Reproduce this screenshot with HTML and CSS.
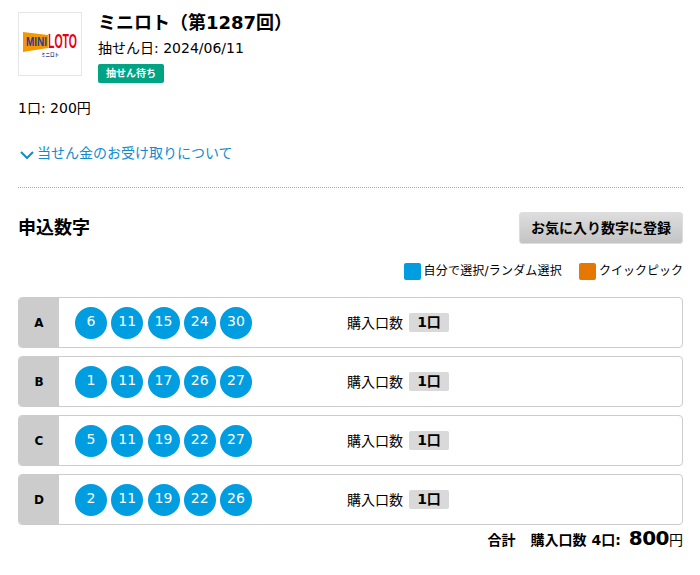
FILE: index.html
```html
<!DOCTYPE html>
<html lang="ja">
  <head>
    <meta charset="UTF-8" />
    <meta name="viewport" content="width=device-width, initial-scale=1.0" />
    <title>ミニロト</title>
    <link rel="stylesheet" href="styles.css">
  </head>
  <body>
    <div class="container">
      <div class="head">
        <div class="head__logo">
          <svg width="58" height="26" viewBox="0 0 58 26">
            <polygon points="2,1 27,4 27,17 2,21" fill="#f39800" />
            <text x="5" y="15" class="logo__mini" textLength="21" lengthAdjust="spacingAndGlyphs">MINI</text>
            <text x="27" y="17" class="logo__loto" textLength="29" lengthAdjust="spacingAndGlyphs">LOTO</text>
            <text x="20" y="25" class="logo__kana" textLength="18" lengthAdjust="spacingAndGlyphs">ミニロト</text>
          </svg>
        </div>
        <div class="head__info">
          <h1 class="head__title">ミニロト（第1287回）</h1>
          <p class="head__date">抽せん日: 2024/06/11</p>
          <span class="head__status">抽せん待ち</span>
        </div>
      </div>
      <p class="price">1口: 200円</p>
      <a class="receive">
        <svg width="14" height="8" viewBox="0 0 14 8"><path d="M1 1l6 6 6-6" fill="none" stroke="#0f8ccf" stroke-width="2" /></svg>
        当せん金のお受け取りについて
      </a>

      <div class="section">
        <h2 class="section__title">申込数字</h2>
        <button class="section__btn">お気に入り数字に登録</button>
      </div>

      <div class="legend">
        <span class="legend__item legend__item--wide"><i class="legend__box legend__box--blue"></i>自分で選択/ランダム選択</span>
        <span class="legend__item"><i class="legend__box legend__box--orange"></i>クイックピック</span>
      </div>

      <div class="row">
        <div class="row__label">A</div>
        <div class="row__balls">
          <span class="ball">6</span><span class="ball">11</span><span class="ball">15</span><span class="ball">24</span><span class="ball">30</span>
        </div>
        <div class="row__count">購入口数<span class="row__unit">1口</span></div>
      </div>
      <div class="row">
        <div class="row__label">B</div>
        <div class="row__balls">
          <span class="ball">1</span><span class="ball">11</span><span class="ball">17</span><span class="ball">26</span><span class="ball">27</span>
        </div>
        <div class="row__count">購入口数<span class="row__unit">1口</span></div>
      </div>
      <div class="row">
        <div class="row__label">C</div>
        <div class="row__balls">
          <span class="ball">5</span><span class="ball">11</span><span class="ball">19</span><span class="ball">22</span><span class="ball">27</span>
        </div>
        <div class="row__count">購入口数<span class="row__unit">1口</span></div>
      </div>
      <div class="row">
        <div class="row__label">D</div>
        <div class="row__balls">
          <span class="ball">2</span><span class="ball">11</span><span class="ball">19</span><span class="ball">22</span><span class="ball">26</span>
        </div>
        <div class="row__count">購入口数<span class="row__unit">1口</span></div>
      </div>

      <div class="total">
        <span class="total__label">合計</span>
        <span>購入口数 4口:</span>
        <span class="total__sum"><b>800</b>円</span>
      </div>
    </div>
  </body>
</html>
```

FILE: styles.css
```css
* {
  box-sizing: border-box;
}
body {
  margin: 0;
  background: #fff;
  color: #000;
  font-family: "DejaVu Sans", "Noto Sans CJK JP", sans-serif;
  font-size: 14px;
}
.container {
  padding: 12px 17px 0 18px;
}

.head {
  display: flex;
  gap: 16px;
}
.head__logo {
  display: flex;
  align-items: center;
  justify-content: center;
  width: 64px;
  height: 64px;
  border: 1px solid #e6e6e6;
}
.head__logo svg {
  overflow: visible;
}
.logo__mini {
  font: bold 12.5px "Liberation Sans", sans-serif;
  fill: #2b3a8c;
}
.logo__loto {
  font: bold 21px "Liberation Sans", sans-serif;
  fill: #e60012;
}
.logo__kana {
  font: bold 5px "Noto Sans CJK JP", sans-serif;
  fill: #2b3a8c;
}
.head__title {
  margin: 0;
  font-size: 18px;
  line-height: 22px;
  font-weight: bold;
}
.head__date {
  margin: 4px 0 0;
  line-height: 20px;
}
.head__status {
  display: block;
  width: 66px;
  height: 19px;
  margin-top: 6px;
  border-radius: 2px;
  background: #00a384;
  color: #fff;
  font-size: 10px;
  font-weight: bold;
  line-height: 19px;
  text-align: center;
}

.price {
  margin: 15px 0 0;
  line-height: 20px;
}
.receive {
  display: flex;
  align-items: center;
  gap: 3px;
  margin-top: 25px;
  padding: 0 0 24px 2px;
  border-bottom: 1px dotted #aaa;
  color: #0f8ccf;
  line-height: 20px;
}
.receive svg {
  margin-top: 3px;
}

.section {
  display: flex;
  align-items: center;
  justify-content: space-between;
  margin-top: 24px;
}
.section__title {
  margin: 0 0 1px;
  font-size: 18px;
  line-height: 22px;
  font-weight: bold;
}
.section__btn {
  width: 164px;
  height: 32px;
  padding: 0 0 3px;
  border: 1px solid #ddd;
  border-radius: 3px;
  background: linear-gradient(#ddd, #c4c4c4);
  color: #000;
  font-family: inherit;
  font-size: 14px;
  font-weight: bold;
}

.legend {
  display: flex;
  justify-content: flex-end;
  gap: 17px;
  margin-top: 19px;
  font-size: 12px;
  line-height: 17px;
}
.legend__item {
  display: flex;
  align-items: center;
  gap: 3px;
}
.legend__item--wide {
  letter-spacing: .2px;
}
.legend__box {
  width: 17px;
  height: 17px;
  border-radius: 2px;
}
.legend__box--blue {
  background: #009de0;
}
.legend__box--orange {
  background: #e67700;
}

.row {
  display: flex;
  align-items: center;
  height: 51px;
  margin-top: 8px;
  border: 1px solid #ccc;
  border-radius: 4px;
  overflow: hidden;
}
.legend + .row {
  margin-top: 17px;
}
.row__label {
  align-self: stretch;
  display: flex;
  align-items: center;
  justify-content: center;
  width: 40px;
  background: #ccc;
  font-size: 12px;
  font-weight: bold;
}
.row__balls {
  display: flex;
  gap: 4.25px;
  width: 288px;
  padding-left: 16px;
}
.ball {
  width: 32px;
  height: 32px;
  border-radius: 50%;
  background: #009de0;
  color: #fff;
  line-height: 29px;
  text-align: center;
}
.row__count {
  display: flex;
  align-items: center;
  gap: 6px;
  line-height: 16px;
}
.row__unit {
  width: 40px;
  height: 19px;
  border-radius: 2px;
  background: #d9d9d9;
  font-weight: bold;
  line-height: 19px;
  text-align: center;
}

.total {
  display: flex;
  justify-content: flex-end;
  align-items: baseline;
  gap: 8px;
  height: 21px;
  margin-top: 1px;
  overflow: hidden;
  font-weight: bold;
}
.total__label {
  margin-right: 7px;
}
.total__sum {
  font-weight: normal;
}
.total__sum b {
  font-size: 20px;
  font-weight: bold;
  letter-spacing: -.5px;
}
```
